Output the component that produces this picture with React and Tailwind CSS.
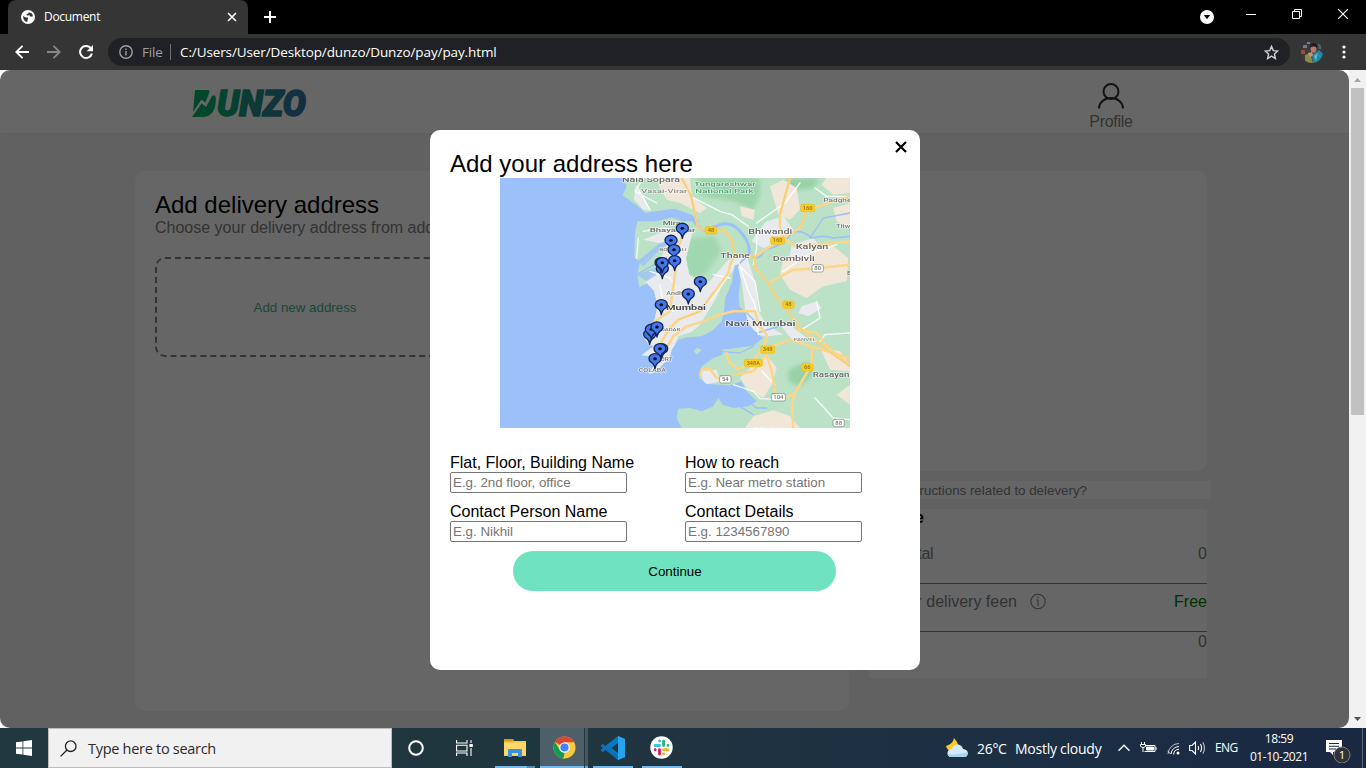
import React from "react";

const ui = "font-['Open_Sans','Noto_Sans',sans-serif]";

function TabStrip() {
  return (
    <div className="flex h-[34px] bg-black pl-2 text-white">
      <div className="flex h-full w-[240px] items-center rounded-t-lg bg-[#353535] pl-[13px] pr-[10px]">
        <svg className="h-[14px] w-[14px]" viewBox="0 0 14 14">
          <circle cx="7" cy="7" r="7" fill="#fff" />
          <path d="M2 5.5 Q4 8 6.5 7.2 Q8 8.5 6.5 9.8 L6.3 12 Q2.2 11.5 2 5.5Z M7.5 2.2 L11 3.5 L12 6.3 L9.5 6.8 L8.5 5.2 L5.8 5.5 L5.6 4 L7.4 3.6Z" fill="#353535" />
        </svg>
        <span className={`ml-[9px] flex-1 text-[12px] tracking-[-0.3px] ${ui}`}>Document</span>
        <svg className="h-[12px] w-[12px]" viewBox="0 0 12 12" stroke="#fff" strokeWidth="1.6">
          <path d="M2 2 L10 10 M10 2 L2 10" />
        </svg>
      </div>
      <svg className="ml-[16px] mt-[11px] h-[12px] w-[12px]" viewBox="0 0 12 12" stroke="#fff" strokeWidth="2">
        <path d="M6 0 V12 M0 6 H12" />
      </svg>
      <div className="ml-auto flex pr-[18px]">
        <svg className="mt-[10px] h-[14px] w-[14px]" viewBox="0 0 14 14">
          <circle cx="7" cy="7" r="7" fill="#fff" />
          <path d="M3.8 5 H10.2 L7 9.3Z" fill="#000" />
        </svg>
        <svg className="ml-[32px] mt-[9px] h-[11px] w-[10px]" viewBox="0 0 10 11" stroke="#fff"><path d="M0 5.5 H10" /></svg>
        <svg className="ml-[36px] mt-[9px] h-[10px] w-[10px]" viewBox="0 0 10 10" fill="none" stroke="#fff"><path d="M.5 2.5 H7.5 V9.5 H.5Z M2.5 2.5 V.5 H9.5 V7.5 H7.5" /></svg>
        <svg className="ml-[36px] mt-[9px] h-[10px] w-[10px]" viewBox="0 0 10 10" stroke="#fff" strokeWidth="1.1"><path d="M0 0 L10 10 M10 0 L0 10" /></svg>
      </div>
    </div>
  );
}

function Avatar() {
  return (
    <svg className="ml-[11px] h-[22px] w-[22px]" viewBox="0 0 22 22">
      <defs><clipPath id="av"><circle cx="11" cy="11" r="11" /></clipPath></defs>
      <g clipPath="url(#av)">
        <rect width="22" height="22" fill="#3b3a40" />
        <path d="M0 9 H4 V13 H0Z" fill="#9c4b35" />
        <path d="M2 4 H6 V7 H2Z M6 1 H9 V3 H6Z" fill="#6b7f86" />
        <path d="M17 3 H20 V8 H18Z" fill="#56646f" />
        <path d="M4 14 L9 12 L12 22 H4Z" fill="#8b8a45" />
        <path d="M11 14 L18 9 L22 13 V22 H12Z" fill="#2487a3" />
        <path d="M13 15 L17 12 L15 20Z" fill="#67b6c9" />
        <ellipse cx="12.5" cy="7.5" rx="2.9" ry="4.2" fill="#b97b60" />
        <path d="M9 6.5 Q9 1.5 13 2 Q17 2 16 7 Q13 4.4 9 6.5Z" fill="#211b1c" />
        <path d="M7 12 L11 11 L12 14 L9 17Z" fill="#c98f74" />
      </g>
    </svg>
  );
}

function Toolbar() {
  return (
    <div className="flex h-[36px] items-center bg-[#353535]">
      <svg className="ml-[15px] h-[14px] w-[14px]" viewBox="0 0 14 14" fill="none" stroke="#fff" strokeWidth="1.9"><path d="M14 7 H1.5 M7.5 .8 L1.3 7 L7.5 13.2" /></svg>
      <svg className="ml-[18px] h-[14px] w-[14px]" viewBox="0 0 14 14" fill="none" stroke="#868686" strokeWidth="1.9"><path d="M0 7 H12.5 M6.5 .8 L12.7 7 L6.5 13.2" /></svg>
      <svg className="ml-[18px] h-[14px] w-[14px]" viewBox="0 0 14 14"><path d="M11.6 3 A6 6 0 1 0 12.9 8.4" fill="none" stroke="#fff" strokeWidth="2" /><path d="M14 0 V6.3 H7.7Z" fill="#fff" /></svg>
      <div className={`ml-[15px] flex h-[28px] w-[1182px] items-center rounded-full bg-[#202124] pl-[11px] pr-[11px] text-[14px] text-white ${ui}`}>
        <svg className="h-[14px] w-[14px]" viewBox="0 0 14 14" fill="none" stroke="#9aa0a6" strokeWidth="1.4"><circle cx="7" cy="7" r="6.2" /><path d="M7 6 V10.4 M7 3.4 V5" /></svg>
        <span className="ml-[9px] w-[21px] text-[13.5px] tracking-[-0.2px] text-[#9aa0a6]">File</span>
        <span className="ml-[7px] h-[16px] w-px bg-[#6b6e72]" />
        <span className="ml-[9px] flex-1 whitespace-nowrap text-[13.5px] tracking-[-0.11px]">C:/Users/User/Desktop/dunzo/Dunzo/pay/pay.html</span>
        <svg className="h-[15px] w-[15px]" viewBox="0 0 15 15" fill="none" stroke="#d0d1d3" strokeWidth="1.4"><path d="M7.5 1.4 L9.3 5.6 L13.8 6 L10.4 9 L11.4 13.5 L7.5 11.1 L3.6 13.5 L4.6 9 L1.2 6 L5.7 5.6Z" /></svg>
      </div>
      <Avatar />
      <svg className="ml-[19px] h-[14px] w-[4px]" viewBox="0 0 4 14" fill="#fff"><circle cx="2" cy="2" r="1.6" /><circle cx="2" cy="7" r="1.6" /><circle cx="2" cy="12" r="1.6" /></svg>
    </div>
  );
}

function Logo() {
  return (
    <svg className="mt-[18px] h-[30px] w-[118px] overflow-visible" viewBox="0 0 118 30">
      <defs>
        <linearGradient id="lg" gradientUnits="userSpaceOnUse" x1="0" y1="0" x2="116" y2="0">
          <stop offset="0" stopColor="#00b36b" /><stop offset=".22" stopColor="#00b070" /><stop offset=".55" stopColor="#218f85" /><stop offset="1" stopColor="#376fac" />
        </linearGradient>
      </defs>
      <path d="M4 2.5 Q4 2 5 2 H17 Q19 2 18.5 4 L14.5 14.5 L10.5 11.5 L2 24Z M1 29 L10.5 15.5 L15 19 L21 8 Q24 6 24.8 9 Q25.5 29 11 29Z" fill="url(#lg)" />
      <text x="26" y="28.3" textLength="89" lengthAdjust="spacingAndGlyphs" fontFamily="Roboto, sans-serif" fontWeight="900" fontStyle="italic" fontSize="36" fill="url(#lg)" stroke="url(#lg)" strokeWidth="1.5" strokeLinejoin="round">UNZO</text>
    </svg>
  );
}

function Page() {
  return (
    <div className="flex h-full flex-col bg-[#f3f3f3] font-['Liberation_Sans',Arial,sans-serif] text-[16px] leading-[18px] text-[#808080]">
      <header className="flex h-[63px] shrink-0 justify-between bg-white pl-[191px] pr-[212px] shadow-[0_1px_2px_rgba(0,0,0,0.06)]">
        <Logo />
        <div className="flex w-[52px] flex-col items-center pt-[13px]">
          <svg className="h-[26px] w-[26px]" viewBox="0 0 26 26" fill="none" stroke="#303030" strokeWidth="2"><circle cx="13" cy="8.5" r="7.5" /><path d="M1 25.5 A12 10.5 0 0 1 25 25.5" /></svg>
          <span className="mt-[4px] tracking-[-0.3px]">Profile</span>
        </div>
      </header>
      <main className="flex gap-5 pl-[135px] pt-[38px]">
        <section className="h-[540px] w-[714px] rounded-[10px] bg-white p-5">
          <h2 className="text-[24px] leading-[28px] text-black">Add delivery address</h2>
          <p className="w-[320px] whitespace-nowrap">Choose your delivery address from address</p>
          <button className="mt-[20px] h-[100px] w-[300px] rounded-[10px] border-2 border-dashed border-[#808080] pt-[2px] text-[13.333px] text-[#41b390]">Add new address</button>
        </section>
        <aside>
          <div className="h-[300px] w-[338px] rounded-[10px] bg-white" />
          <div className="mt-[10px] h-[18px] w-[342px] bg-white pr-[124px] text-right text-[13.333px] leading-[19px]">Any instructions related to delevery?</div>
          <div className="mt-[10px] h-[169px] w-[338px] bg-white">
            <div className="w-[55px] text-right font-bold text-black">Price</div>
            <div className="flex h-[57px] justify-between border-b border-[#808080] pt-[18px]">
              <span className="w-[64px] whitespace-nowrap text-right tracking-[-0.5px]">Item total</span><span>0</span>
            </div>
            <div className="flex h-[48px] border-b border-[#808080] pt-[9px]">
              <span className="w-[148px] whitespace-nowrap text-right">Partner delivery feen</span>
              <svg className="ml-[13px] h-[17px] w-[16px]" viewBox="0 0 16 17" fill="none" stroke="#808080" strokeWidth="1.1"><circle cx="8" cy="8.5" r="7.2" /><path d="M8 7 V13 M8 3.5 V5.2 M6.5 7 H8" /></svg>
              <span className="ml-auto text-[#008000]">Free</span>
            </div>
            <div className="pt-[1px] text-right">0</div>
          </div>
        </aside>
      </main>
    </div>
  );
}

const labels = [
  ["Nala Sopara", 366, 13, 174, 19, "#666"], ["Vasai-Virar", 424, 45, 138, 18, "#888"],
  ["Tungareshwar", 582, 25, 185, 18, "#459c70"], ["National Park", 586, 45, 175, 18, "#459c70"],
  ["Padghe", 970, 71, 84, 18, "#777"], ["Titwala", 1008, 150, 72, 17, "#777"],
  ["Mira", 488, 140, 54, 17, "#666"], ["Bhayandar", 449, 161, 137, 18, "#666"],
  ["BORIVALI", 478, 220, 82, 12, "#777"], ["Bhiwandi", 745, 167, 132, 20, "#666"],
  ["Kalyan", 887, 213, 98, 21, "#666"], ["Thane", 661, 239, 89, 21, "#666"],
  ["Dombivli", 818, 248, 126, 20, "#666"], ["Andheri", 499, 351, 74, 16, "#777"],
  ["Mumbai", 498, 395, 120, 22, "#484848", 700], ["Navi Mumbai", 676, 444, 211, 22, "#5a5a5a", 600],
  ["DADAR", 483, 458, 58, 13, "#777"], ["PANVEL", 881, 489, 67, 13, "#888"],
  ["FORT", 470, 550, 48, 14, "#777"], ["COLABA", 416, 581, 82, 14, "#777"],
  ["Rasayani", 938, 598, 118, 20, "#666"], ["Vashi", 768, 762, 70, 18, "#777"],
  ["B", 1041, 291, 14, 16, "#666"],
];
const shields = [
  [633, 157, "48", 1], [923, 90, "160", 1], [833, 188, "160", 1], [865, 380, "48", 1],
  [803, 515, "348", 1], [760, 555, "348A", 1], [922, 568, "66", 1],
  [953, 271, "80", 0], [676, 604, "54", 0], [835, 658, "104", 0], [1016, 735, "88", 0],
];
const pins = [
  [547, 181], [513, 217], [522, 245], [524, 278], [487, 302], [483, 284], [487, 284], [601, 341], [565, 378],
  [484, 410], [449, 499], [454, 484], [471, 477], [485, 542], [480, 542], [465, 572],
];

function CityMap() {
  return (
    <svg className="mx-auto block h-[250px] w-[350px]" viewBox="0 0 1050 750" strokeLinejoin="round" strokeLinecap="round">
      <defs>
        <filter id="soft"><feGaussianBlur stdDeviation="1.4" /></filter>
        <filter id="soft8" x="-20%" y="-20%" width="140%" height="140%"><feGaussianBlur stdDeviation="7" /></filter>
        <clipPath id="land">
          <path d="M368 0 L380 25 368 52 405 78 438 105 470 102 525 94 575 110 600 130 550 130 515 118 470 130 412 130 405 165 403 240 420 252 412 290 418 328 440 315 462 338 472 380 465 420 452 450 430 475 445 500 462 504 425 532 452 535 466 555 446 588 462 586 492 555 508 545 515 515 535 485 560 478 605 475 640 455 665 430 672 400 676 360 696 312 704 262 713 260 722 305 716 345 718 385 735 400 748 440 770 465 790 480 760 503 710 510 665 515 668 530 640 540 605 565 598 600 620 618 690 622 724 610 740 640 770 670 745 685 700 690 668 680 655 660 640 685 605 700 570 690 535 692 530 720 545 750 H1050 V0Z" />
        </clipPath>
      </defs>
      <rect width="1050" height="750" fill="#9cc0fa" />
      <g filter="url(#soft)">
        <g clipPath="url(#land)">
          <rect width="1050" height="750" fill="#bbe2c7" />
          <g filter="url(#soft8)">
            <path d="M590 0 H780 L780 50 760 95 700 70 640 60 600 50Z" fill="#9bd4aa" />
            <path d="M570 180 L645 175 665 220 615 290 580 300 545 270Z" fill="#a1d7b0" />
            <path d="M860 0 L960 0 940 30 870 40Z M865 575 L925 550 940 590 900 625 865 610Z" fill="#98d1a7" />
          </g>
          <path d="M470 0 L570 0 575 55 620 90 600 105 540 75 500 65 480 30Z" fill="#f1e7d8" />
          <path d="M810 25 L850 5 890 30 900 95 870 125 835 110 820 60Z M980 0 H1050 V45 L1000 50 965 20Z M1000 90 L1050 75 V150 L1010 130Z" fill="#f1e7d8" />
          <path d="M850 240 L920 210 1000 205 1045 240 1040 310 970 325 920 360 870 335 840 290Z M720 600 L760 560 800 530 830 570 815 620 790 660 740 630Z M735 750 L760 715 820 697 870 715 900 750Z M960 510 L1020 520 1050 560 V580 L990 575Z M1010 650 L1050 620 V680Z M720 85 L765 95 760 125 725 115Z" fill="#f1e7d8" />
          <path d="M405 30 L430 50 450 98 430 95 402 65Z M430 185 L490 160 580 155 558 240 568 290 620 320 685 245 722 245 668 320 648 360 600 440 575 462 535 475 500 560 445 590 420 530 450 500 430 480 470 400 430 320 470 270 500 200Z" fill="#e8eaed" />
          <path d="M770 165 L800 130 850 115 880 155 860 190 790 210 755 190Z M700 240 L740 235 765 310 775 400 800 440 850 470 800 475 745 465 735 390 725 310Z M875 200 L940 180 960 205 910 240 870 230Z M600 580 L650 575 660 610 615 620Z M905 385 L950 370 965 390 925 415 895 405Z M840 440 L870 440 920 480 880 490Z" fill="#e8eaed" />
          <path d="M412 250 L480 195 530 180 540 195 490 205 430 265Z M410 290 L490 260 500 270 440 310Z" fill="#9cc0fa" opacity=".75" />
        </g>
        <path d="M590 510 L605 515 590 530 582 520Z" fill="#bbe2c7" />
        <g fill="none" stroke="#9cc0fa">
          <path strokeWidth="9" d="M525 98 Q570 108 595 145 Q620 168 640 148 Q690 120 725 165 Q750 195 748 225" />
          <path strokeWidth="5" d="M708 268 L725 250 748 230 Q775 255 795 215 Q850 205 875 165 Q900 150 935 180 Q970 170 1000 180 L1050 175" />
          <path strokeWidth="12" d="M402 120 Q440 108 525 98" />
          <path strokeWidth="4" d="M410 290 L500 238 M415 255 L500 190 M770 465 L820 450 860 440 M650 520 L720 525 760 505 M670 645 L720 650 770 690 800 690 M695 670 L760 710 M735 400 L765 430 M930 180 L970 120 1050 105" />
        </g>
        <g fill="none" stroke="#fff" strokeWidth="4" opacity=".85">
          <path d="M572 55 L660 100 695 110 745 145 M770 135 L855 75 900 15 M410 25 L450 95 M470 75 L405 40 L430 0 M430 160 L490 150 540 160 M415 180 L410 240 M715 250 L745 340 765 380 770 440 775 470 M770 170 L770 210 760 260 M640 290 L690 300 M725 270 L765 310 780 400 M945 30 L980 55 1040 55 M1010 200 L930 225 850 280 M960 490 L975 470 1050 465 M905 455 L960 420 950 370 M785 580 L825 620 M700 620 L760 640 780 662 845 665 M480 320 L490 380 520 400 M450 280 L510 300 530 330 M600 400 L645 350 680 300 M945 660 L1000 720 1050 725" />
        </g>
        <g fill="none" stroke="#fbd588" strokeWidth="7.5">
          <path d="M545 0 L574 55 585 110 595 150 630 158 670 155 695 185 704 230 765 235 850 180 840 145 840 110 870 0" />
          <path d="M1050 55 L940 90 923 95 900 150 840 185 M850 180 L885 205 950 200 1050 190 M765 235 L765 270 805 315 830 360 880 420 900 450 980 515 1050 565" />
          <path d="M805 315 L880 275 953 271 1050 260 M704 235 L690 260 685 285 645 340 600 400 535 425 510 450 485 490 480 520 M545 180 L530 220 525 290 515 360 510 400 465 430 M500 510 L520 475 560 445 610 430 660 410 700 400 765 400 775 440 800 470 790 515 750 555 715 575 685 550 680 525 M790 515 L830 500 870 485 900 495 965 515 1050 540 M890 455 L950 465 985 510 1050 560 M935 510 L935 560 885 645 875 680 880 750 M800 530 L815 580 825 640 845 660 880 650 M600 590 L605 575 630 572 650 600 670 605 M700 590 L760 580 800 530" />
        </g>
        <g fill="none" stroke="#f1b544" strokeWidth="2" opacity=".5">
          <path d="M545 0 L574 55 585 110 595 150 630 158 670 155 695 185 704 230 765 235 765 270 805 315 830 360 880 420 900 450 980 515 1050 565 M870 0 L840 110 M923 95 L900 150 M535 425 L600 400 640 340" />
        </g>
        {shields.map(([x, y, t, y1], i) => (
          <g key={i}>
            <rect x={x - (t.length > 3 ? 27 : t.length > 2 ? 21 : 17)} y={y - 11} width={t.length > 3 ? 54 : t.length > 2 ? 42 : 34} height="22" rx="5" fill={y1 ? "#f7cd28" : "#fff"} stroke={y1 ? "#eebd20" : "#6d8575"} strokeWidth="2" />
            <text x={x} y={y + 5} textAnchor="middle" fontSize="14" textLength={t.length * 10} lengthAdjust="spacingAndGlyphs" fontFamily="Roboto, sans-serif" fontWeight="500" fill={y1 ? "#967518" : "#777"}>{t}</text>
          </g>
        ))}
        {labels.map(([t, x, y, w, s, c, b], i) => (
          <text key={i} x={x} y={y} textLength={w} lengthAdjust="spacingAndGlyphs" fontSize={s} fontFamily="Roboto, sans-serif" fontWeight={b || 500} fill={c} stroke="#fff" strokeWidth="3" strokeOpacity=".75" paintOrder="stroke">{t}</text>
        ))}
        {pins.map(([x, y], i) => (
          <g key={i}>
            <path d={`M${x} ${y} Q${x - 2} ${y - 14} ${x - 13} ${y - 20} A18 15 0 1 1 ${x + 13} ${y - 20} Q${x + 2} ${y - 14} ${x} ${y}Z`} fill="#4377ee" stroke="#15234f" strokeWidth="4" />
            <ellipse cx={x} cy={y - 30} rx="5.5" ry="4.5" fill="#030818" />
          </g>
        ))}
      </g>
    </svg>
  );
}

function Field({ label, hint }) {
  return (
    <label className="flex flex-col items-start">
      <span className="whitespace-nowrap text-[16px] leading-[18px]">{label}</span>
      <input placeholder={hint} className="h-[21px] w-[177px] rounded-[2px] border border-[#767676] bg-white px-[2px] py-0 text-[13.333px] leading-[15px] placeholder:text-[#757575]" />
    </label>
  );
}

function Modal() {
  return (
    <div className="relative h-[540px] w-[490px] rounded-[10px] bg-white px-5 pt-5 font-['Liberation_Sans',Arial,sans-serif] text-black">
      <svg className="absolute right-[13px] top-[11px] h-[12px] w-[12px]" viewBox="0 0 12 12" stroke="#000" strokeWidth="2.2"><path d="M1 1 L11 11 M11 1 L1 11" /></svg>
      <h2 className="text-[24px] leading-[28px]">Add your address here</h2>
      <CityMap />
      <div className="mt-[26px] grid grid-cols-[235px_215px] gap-y-[10px]">
        <Field label="Flat, Floor, Building Name" hint="E.g. 2nd floor, office" />
        <Field label="How to reach" hint="E.g. Near metro station" />
        <Field label="Contact Person Name" hint="E.g. Nikhil" />
        <Field label="Contact Details" hint="E.g. 1234567890" />
      </div>
      <button className="ml-[63px] mt-[9px] block h-[40px] w-[323px] rounded-full bg-[#6fe3c0] pl-[1px] pt-[2px] text-[13.333px]">Continue</button>
    </div>
  );
}

function Taskbar() {
  return (
    <div className={`flex h-[40px] bg-[linear-gradient(90deg,#203840_0%,#20363f_40%,#1f3241_55%,#1c2f44_75%,#1a2842_100%)] text-white ${ui}`}>
      <div className="flex w-[48px] items-center justify-center">
        <svg className="h-[16px] w-[16px]" viewBox="0 0 16 16" fill="#fff"><path d="M0 2.3 L6.5 1.4 V7.6 H0Z M7.3 1.3 L16 0 V7.6 H7.3Z M0 8.4 H6.5 V14.6 L0 13.7Z M7.3 8.4 H16 V16 L7.3 14.7Z" /></svg>
      </div>
      <div className="flex w-[344px] items-center border border-[#bcbcbc] bg-[#f1f1f1] pl-[11px] text-[#2b2b2b]">
        <svg className="h-[17px] w-[17px]" viewBox="0 0 17 17" fill="none" stroke="#222" strokeWidth="1.3"><circle cx="10.7" cy="6.2" r="5.3" /><path d="M7 10 L.6 16.4" /></svg>
        <span className="ml-[11px] pt-[2px] text-[14.5px] tracking-[-0.29px]">Type here to search</span>
      </div>
      <div className="flex w-[48px] items-center justify-center"><svg className="h-[16px] w-[16px]" viewBox="0 0 16 16"><circle cx="8" cy="8" r="6.8" fill="none" stroke="#fff" strokeWidth="2" /></svg></div>
      <div className="flex w-[48px] items-center justify-center">
        <svg className="h-[16px] w-[17px]" viewBox="0 0 17 16" fill="none" stroke="#fff" strokeWidth="1.1"><path d="M.6 0 V3 H11 V0 M.6 5.2 H11 V11 H.6Z M.6 16 V13 H11 V16 M15 0 V3 M15 8 V16" /><path d="M13.4 4 H16.8 V7 H13.4Z" fill="#fff" stroke="none" /></svg>
      </div>
      <div className="ml-[7px] flex w-[40px] flex-col items-center justify-end">
        <svg className="mb-[8px] h-[20px] w-[22px]" viewBox="0 0 22 20"><path d="M0 1 H9 L10 3 H22 V18 H0Z" fill="#f7cb4d" /><path d="M0 1 H9 L10 3.6 H0Z" fill="#df9b0c" /><path d="M0 5 H22 V17 H0Z" fill="#fdd96c" /><path d="M4 19 V12 Q4 11 5 11 H17 Q18 11 18 12 V19 H14 V15 H8 V19Z" fill="#3a92dd" /></svg>
        <div className="flex h-[2px] w-full bg-[#76b9ed]"><span className="ml-auto w-[8px] bg-[#568aae]" /></div>
      </div>
      <div className="ml-[5px] flex w-[48px] bg-[#4d5f68]">
        <div className="flex w-[44px] flex-col items-center justify-end">
          <svg className="mb-[7px] ml-[4px] h-[23px] w-[23px]" viewBox="0 0 48 48">
            <circle cx="24" cy="24" r="23" fill="#f9ca3e" />
            <path d="M24 24 L4.1 12.5 A23 23 0 0 1 44 13 H24Z" fill="#db4437" />
            <path d="M4.1 12.5 L14.5 29.5 24 35 L22 47 A23 23 0 0 1 4.1 12.5Z" fill="#109c58" />
            <path d="M33.5 29.5 L24 47 H21 L28 33Z" fill="#f9ca3e" />
            <circle cx="24" cy="24" r="11" fill="#f3f5f7" /><circle cx="24" cy="24" r="8.5" fill="#4285f4" />
          </svg>
          <div className="h-[2px] w-full bg-[#76b9ed]" />
        </div>
        <div className="flex w-[4px] items-end border-l border-[#26363f] bg-[#44565f]"><span className="h-[2px] w-full bg-[#6aa6d5]" /></div>
      </div>
      <div className="ml-[5px] flex w-[40px] flex-col items-center justify-end">
        <svg className="mb-[6px] h-[24px] w-[24px]" viewBox="0 0 24 24"><path d="M17 0 L24 3 V21 L17 24 L5 13.5 L2 16 L0 15 V13.5 L17 0Z" fill="#0879bf" /><path d="M0 9 L2 8 L17 20 V24 L0 10.5Z" fill="#0a72b5" /><path d="M17 7 L10.5 12 L17 17Z" fill="#20363f" /><path d="M17 0 L24 3 V21 L17 24Z" fill="#25a4ef" /></svg>
        <div className="h-[2px] w-full bg-[#76b9ed]" />
      </div>
      <div className="ml-[9px] flex w-[40px] flex-col items-center justify-end">
        <svg className="mb-[7px] mr-px h-[23px] w-[23px]" viewBox="0 0 23 23" strokeWidth="2.9" strokeLinecap="round">
          <circle cx="11.5" cy="11.5" r="11.2" fill="#fff" />
          <path d="M9.6 5 V5.1 M5 9.5 H9.6" stroke="#36c5f0" /><path d="M13.6 5.2 V9.5 M18 9.5 V9.4" stroke="#2eb67d" /><path d="M13.6 13.7 H18 M13.6 18 H13.7" stroke="#ecb22e" /><path d="M9.5 13.7 V18 M5.1 13.7 H5.2" stroke="#e01e5a" />
        </svg>
        <div className="h-[2px] w-full bg-[#76b9ed]" />
      </div>
      <div className="ml-auto flex items-center">
        <svg className="h-[20px] w-[22px]" viewBox="0 0 22 20"><path d="M8 0 Q7 6 0 8 Q1 13 7 13 Q15 11 11 4Z" fill="#ffc928" /><path d="M5 19 Q1 18.5 1.5 14.5 Q2 11 6 11 Q7 6 12 6.5 Q16 7 17 11 Q22 11.5 21.8 15.5 Q21.5 19 18 19Z" fill="#d5ebfb" /><path d="M5 19 Q2 18.5 1.8 16 Q10 17.5 21.5 14 Q22 19 18 19Z" fill="#a9d5f5" /></svg>
        <span className="ml-[9px] w-[38px] whitespace-nowrap text-[14px] tracking-[-0.3px]">26°C</span>
        <span className="w-[91px] whitespace-nowrap text-[14px] tracking-[-0.25px]">Mostly cloudy</span>
        <svg className="ml-[12px] h-[8px] w-[12px]" viewBox="0 0 12 8" fill="none" stroke="#fff" strokeWidth="1.3"><path d="M.5 6.7 L6 1.2 L11.5 6.7" /></svg>
        <svg className="ml-[10px] h-[12px] w-[17px]" viewBox="0 0 17 12" fill="none" stroke="#fff"><path d="M5 3.5 H15 V9.5 H4.5 M16 5 V8 M1.5 0 V2 M4.5 0 V2 M.5 2.5 H5.5 V4 Q5 5.5 3 5.5 Q1 5.5 .5 4Z M3 5.5 V10" /><path d="M6.5 5 H13.5 V8 H6.5Z" fill="#fff" /></svg>
        <svg className="ml-[10px] h-[13px] w-[13px]" viewBox="0 0 13 13" fill="none" stroke="#fff" strokeWidth="1"><path d="M1 12 A11 11 0 0 1 12 1.5" opacity=".7" /><path d="M4 12 A8 8 0 0 1 12 4.5 M6.7 12.5 A5.6 5.6 0 0 1 12 7.2" /><circle cx="11" cy="11" r="1.5" fill="#fff" stroke="none" /><path d="M.5 9 L4 12" opacity=".7" /></svg>
        <svg className="ml-[9px] h-[14px] w-[17px]" viewBox="0 0 17 14" fill="none" stroke="#fff" strokeWidth="1.1"><path d="M.6 4.5 H3 L6.5 1 V13 L3 9.5 H.6Z M9 5 Q10.2 7 9 9 M11.4 3 Q13.8 7 11.4 11" /><path d="M13.8 1.3 Q17.2 7 13.8 12.7" opacity=".7" /></svg>
        <span className="ml-[9px] w-[23px] text-[12px] tracking-[-0.6px]">ENG</span>
        <div className="ml-[11px] flex w-[60px] flex-col items-center whitespace-nowrap text-[12px] leading-[18px] tracking-[-0.45px]"><span>18:59</span><span>01-10-2021</span></div>
        <svg className="ml-[17px] mt-[4px] h-[25px] w-[25px]" viewBox="0 0 25 25"><path d="M0 2 H16 V14 H7 V17 L4 14 H0Z" fill="#fff" /><path d="M3 5.5 H13 M3 8.2 H13 M3 11 H10" stroke="#1a2842" strokeWidth="1.1" /><circle cx="16" cy="17" r="8" fill="#303236" stroke="#7b7f87" /><text x="16" y="21" textAnchor="middle" fontSize="11.5" fontFamily="Open Sans, sans-serif" fill="#fff">1</text></svg>
        <span className="ml-[11px] mr-[3px] h-[40px] w-px bg-[#5b6678]" />
      </div>
    </div>
  );
}

export default function App() {
  return (
    <div className="flex h-[768px] w-[1366px] flex-col overflow-hidden bg-white">
      <TabStrip />
      <Toolbar />
      <div className="flex h-[658px]">
        <div className="relative h-full w-[1349px] overflow-hidden">
          <Page />
          <div className="absolute inset-0 flex items-start justify-center overflow-hidden rounded-[10px] bg-black/60 pl-px pt-[60px] shadow-[0_0_0_10px_white]">
            <Modal />
          </div>
        </div>
        <div className="flex w-[17px] flex-col items-center justify-between bg-[#f1f1f1] pb-[7px] pt-[8px]">
          <svg className="h-[4px] w-[7px] shrink-0" viewBox="0 0 7 4" fill="#a3a3a3"><path d="M0 4 L3.5 0 L7 4Z" /></svg>
          <div className="mb-auto mt-[6px] h-[327px] w-[13px] shrink-0 bg-[#c1c1c1]" />
          <svg className="h-[4px] w-[7px]" viewBox="0 0 7 4" fill="#505050"><path d="M0 0 L3.5 4 L7 0Z" /></svg>
        </div>
      </div>
      <Taskbar />
    </div>
  );
}
